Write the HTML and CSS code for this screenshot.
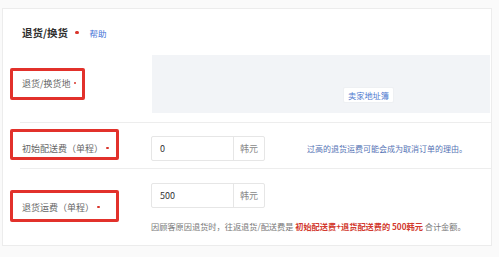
FILE: index.html
```html
<!DOCTYPE html>
<html lang="zh-CN">
<head>
<meta charset="utf-8">
<link rel="stylesheet" href="styles.css">
</head>
<body>
<div class="card">
  <div class="header">
    <span class="title">退货/换货</span><span class="dot title-dot"></span><a class="help">帮助</a>
  </div>
  <div class="row row-addr">
    <div class="label-cell"><div class="label box1">退货/换货地<span class="dot"></span></div></div>
    <div class="addr-area"><span class="addr-btn">卖家地址簿</span></div>
  </div>
  <div class="sep"></div>
  <div class="row row-fee1">
    <div class="label-cell"><div class="label box2">初始配送费（单程）<span class="dot"></span></div></div>
    <div class="field">
      <div class="input-group"><span class="input">0</span><span class="addon">韩元</span></div>
      <span class="hint">过高的退货运费可能会成为取消订单的理由。</span>
    </div>
  </div>
  <div class="sep"></div>
  <div class="row row-fee2">
    <div class="label-cell"><div class="label box3">退货运费（单程）<span class="dot"></span></div></div>
    <div class="field-col">
      <div class="input-group"><span class="input">500</span><span class="addon">韩元</span></div>
      <p class="note">因顾客原因退货时，往返退货/配送费是 <strong class="hl">初始配送费+退货配送费的 500韩元</strong> 合计金额。</p>
    </div>
  </div>
</div>
</body>
</html>
```
FILE: styles.css
```css
* { box-sizing: border-box; }
html, body { margin: 0; padding: 0; }
body {
  width: 499px;
  height: 257px;
  background: #fafafa;
  font-family: "Noto Sans CJK SC", "Noto Sans", sans-serif;
  color: #555;
  overflow: hidden;
}
.card {
  margin: 8px 0 0 2px;
  width: 490px;
  height: 238px;
  background: #fff;
  border: 1px solid #ececec;
}
.header {
  padding: 17px 0 0 19px;
  display: flex;
  align-items: center;
  height: 30px;
  margin-bottom: 16px;
}
.title {
  font-size: 10.5px;
  font-weight: bold;
  color: #2f2f2f;
  line-height: 14px;
}
.dot {
  display: inline-block;
  width: 2.5px;
  height: 2.5px;
  border-radius: 50%;
  background: #d9342b;
  margin-left: 3px;
  vertical-align: 0.3em;
}
.title-dot { width: 3.5px; height: 3.5px; margin-left: 7px; vertical-align: middle; }
.help {
  margin-left: 11px;
  font-size: 8.5px;
  color: #3f72d6;
  line-height: 14px;
}
.row { display: flex; }
.label-cell { width: 148px; flex: none; padding-left: 7px; }
.label {
  border: 3px solid #e2312b;
  border-radius: 2px;
  padding-left: 9px;
  font-size: 9px;
  line-height: 12px;
  color: #666;
  white-space: nowrap;
}
.row-addr { height: 67px; }
.box1 { width: 75px; height: 32px; margin-top: 13px; padding-top: 7px; }
.addr-area {
  margin-left: 1px;
  width: 338px;
  height: 58px;
  background: #f2f4f7;
  display: flex;
  align-items: flex-end;
  padding: 0 0 10px 191px;
}
.addr-btn {
  height: 16px;
  padding: 0 4px;
  background: #fff;
  border: 1px solid #eef0f3;
  border-radius: 2px;
  font-size: 8.2px;
  line-height: 14px;
  color: #4d78cf;
  white-space: nowrap;
}
.sep { height: 1px; margin-left: 17px; background: #ededed; }
.row-fee1 { height: 45px; }
.box2 { width: 109px; height: 31px; margin-top: 6px; padding-top: 11px; }
.field { display: flex; align-items: center; padding-top: 13px; height: 38px; }
.input-group {
  display: flex;
  width: 114px;
  height: 25px;
  border: 1px solid #e6e6e6;
  border-radius: 2px;
  flex: none;
}
.input {
  width: 82px;
  border-right: 1px solid #e6e6e6;
  padding-left: 8px;
  font-size: 9px;
  line-height: 23px;
  color: #333;
}
.addon {
  flex: 1;
  text-align: center;
  font-size: 9px;
  line-height: 23px;
  color: #888;
}
.hint {
  margin-left: 42px;
  font-size: 8px;
  color: #5573b5;
  white-space: nowrap;
}
.row-fee2 { height: 76px; }
.box3 { width: 109px; height: 32px; margin-top: 21px; padding-top: 9px; }
.field-col { padding-top: 14px; }
.note {
  margin: 12px 0 0 0;
  font-size: 8.2px;
  line-height: 12px;
  color: #777;
  white-space: nowrap;
}
.hl { color: #d2392e; font-weight: bold; }
```
